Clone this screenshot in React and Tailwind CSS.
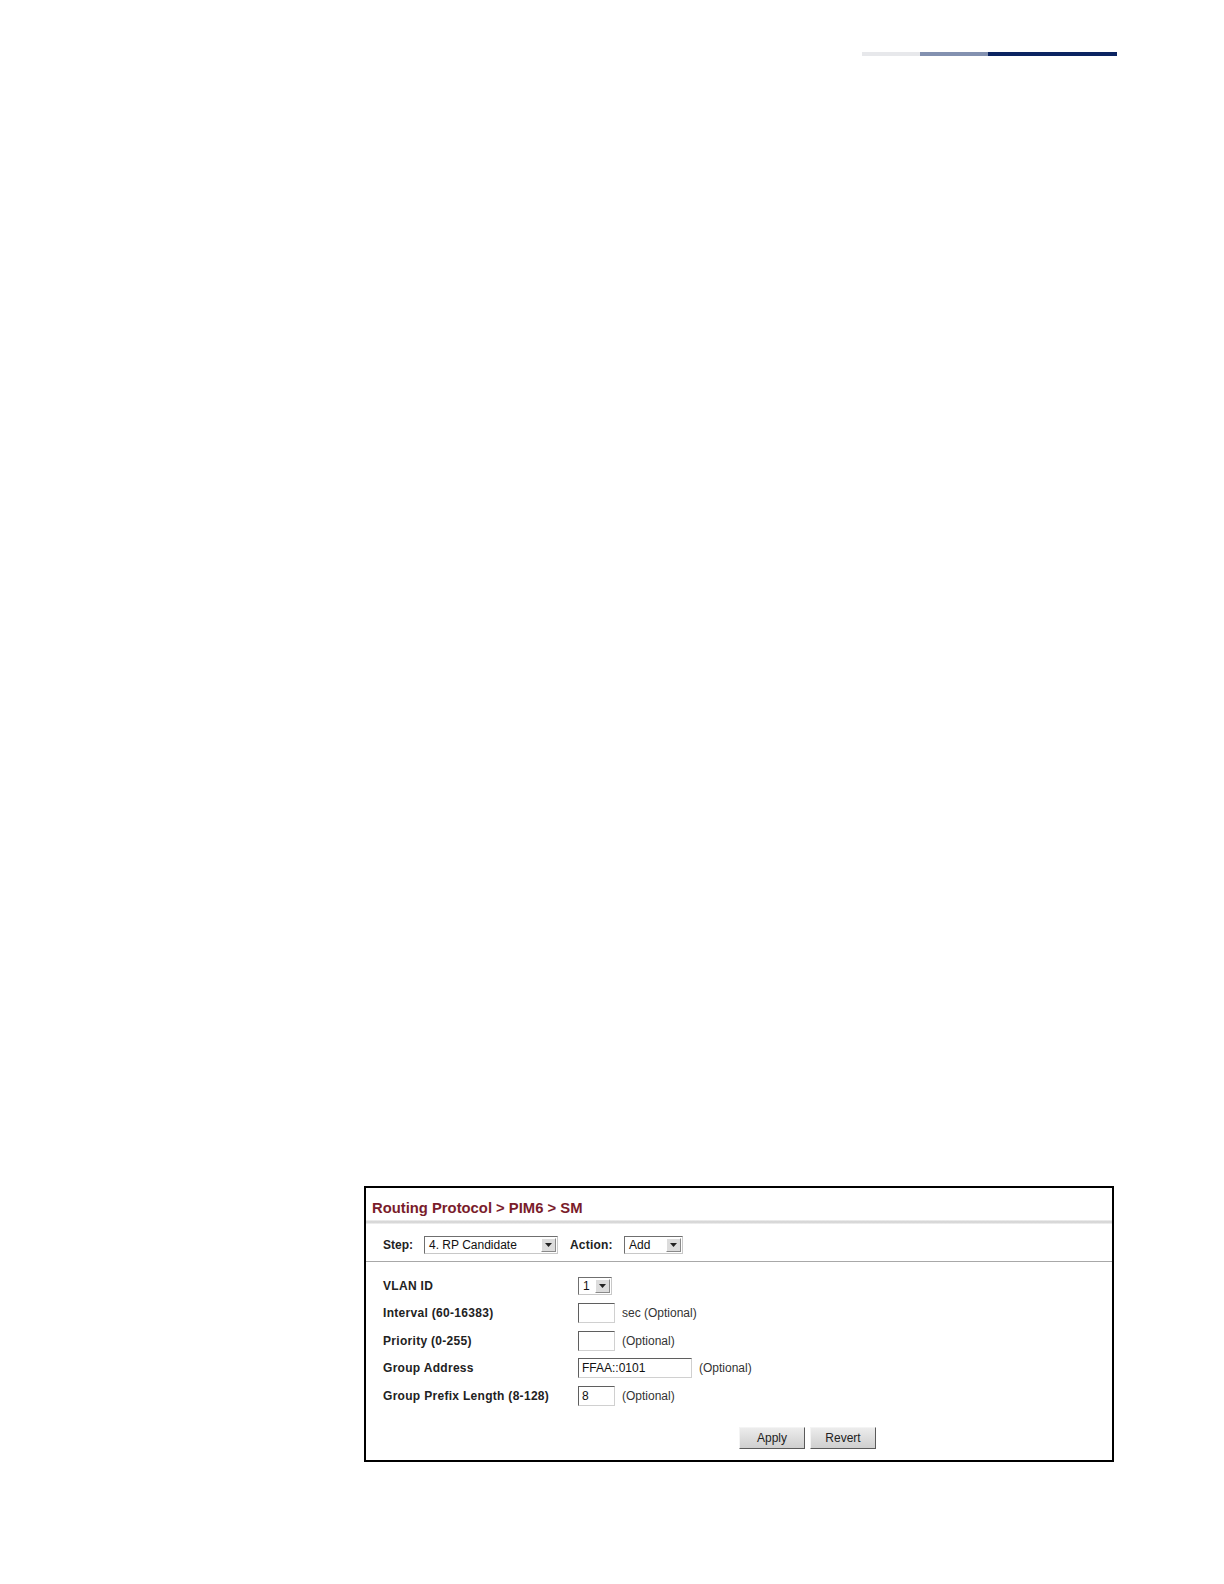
import React from 'react';

function Arrow() {
  return (
    <svg width="7" height="4" viewBox="0 0 7 4">
      <path d="M0 0h7L3.5 4z" fill="#222" />
    </svg>
  );
}

function Select({ value, width }) {
  return (
    <div className={`flex items-stretch h-[18px] border border-[#6f6f6f] border-r-[#c8c8c8] border-b-[#c8c8c8] bg-white ${width}`}>
      <div className="flex-1 pl-[4px] text-[12px] leading-[16px] text-[#111] truncate">{value}</div>
      <div className="w-[15px] m-[1px] flex items-center justify-center bg-[#dcdcdc] border border-t-white border-l-white border-r-[#8a8a8a] border-b-[#8a8a8a]">
        <Arrow />
      </div>
    </div>
  );
}

function Input({ value = '', width }) {
  return (
    <div className={`h-[20px] border border-[#5f5f5f] border-r-[#d0d0d0] border-b-[#d0d0d0] bg-white pl-[3px] text-[12px] leading-[18px] text-[#111] ${width}`}>
      {value}
    </div>
  );
}

function Row({ label, children }) {
  return (
    <div className="flex items-center h-[27.5px]">
      <div className="w-[195px] text-[12px] tracking-[0.3px] font-bold text-[#222]">{label}</div>
      <div className="flex items-center gap-[7px] text-[12px] text-[#333]">{children}</div>
    </div>
  );
}

function Button({ children }) {
  return (
    <div className="w-[66px] h-[22px] flex items-center justify-center text-[12px] text-[#222] bg-gradient-to-b from-[#ececec] to-[#cfcfcf] border border-t-[#f4f4f4] border-l-[#f4f4f4] border-r-[#5a5a5a] border-b-[#5a5a5a]">
      {children}
    </div>
  );
}

export default function App() {
  return (
    <div className="w-[1224px] h-[1584px] bg-white font-['Liberation_Sans',Arial,sans-serif]">
      {/* page header bar */}
      <div className="pt-[52px] pl-[862px] flex">
        <div className="w-[58px] h-[4px] bg-[#e7e8eb]" />
        <div className="w-[68px] h-[4px] bg-[#8391b0]" />
        <div className="w-[129px] h-[4px] bg-[#0b2461]" />
      </div>

      {/* screenshot frame */}
      <div className="mt-[1130px] ml-[364px] w-[750px] h-[276px] border-2 border-black flex flex-col">
        <div className="h-[32px] flex items-end pl-[6px] pb-[1px]">
          <span className="text-[14.8px] font-bold text-[#7a1c2b]">Routing Protocol &gt; PIM6 &gt; SM</span>
        </div>
        <div className="h-[4px] bg-gradient-to-b from-[#f2f2f2] via-[#cfcfcf] to-[#f4f4f4]" />
        <div className="h-[37px] flex items-center pl-[17px] pt-[5px]">
          <span className="text-[12px] font-bold text-[#222] w-[41px]">Step:</span>
          <Select value="4. RP Candidate" width="w-[134px]" />
          <span className="text-[12px] font-bold text-[#222] ml-[12px] w-[54px] tracking-[0.2px]">Action:</span>
          <Select value="Add" width="w-[59px]" />
        </div>
        <div className="h-px bg-[#a8a8a8]" />
        <div className="pl-[17px] pt-[10px] flex flex-col">
          <Row label="VLAN ID">
            <Select value="1" width="w-[34px]" />
          </Row>
          <Row label="Interval (60-16383)">
            <Input width="w-[37px]" />
            <span>sec (Optional)</span>
          </Row>
          <Row label="Priority (0-255)">
            <Input width="w-[37px]" />
            <span>(Optional)</span>
          </Row>
          <Row label="Group Address">
            <Input value="FFAA::0101" width="w-[114px]" />
            <span>(Optional)</span>
          </Row>
          <Row label="Group Prefix Length (8-128)">
            <Input value="8" width="w-[37px]" />
            <span>(Optional)</span>
          </Row>
        </div>
        <div className="flex gap-[5px] pl-[373px] mt-[17px]">
          <Button>Apply</Button>
          <Button>Revert</Button>
        </div>
      </div>
    </div>
  );
}
